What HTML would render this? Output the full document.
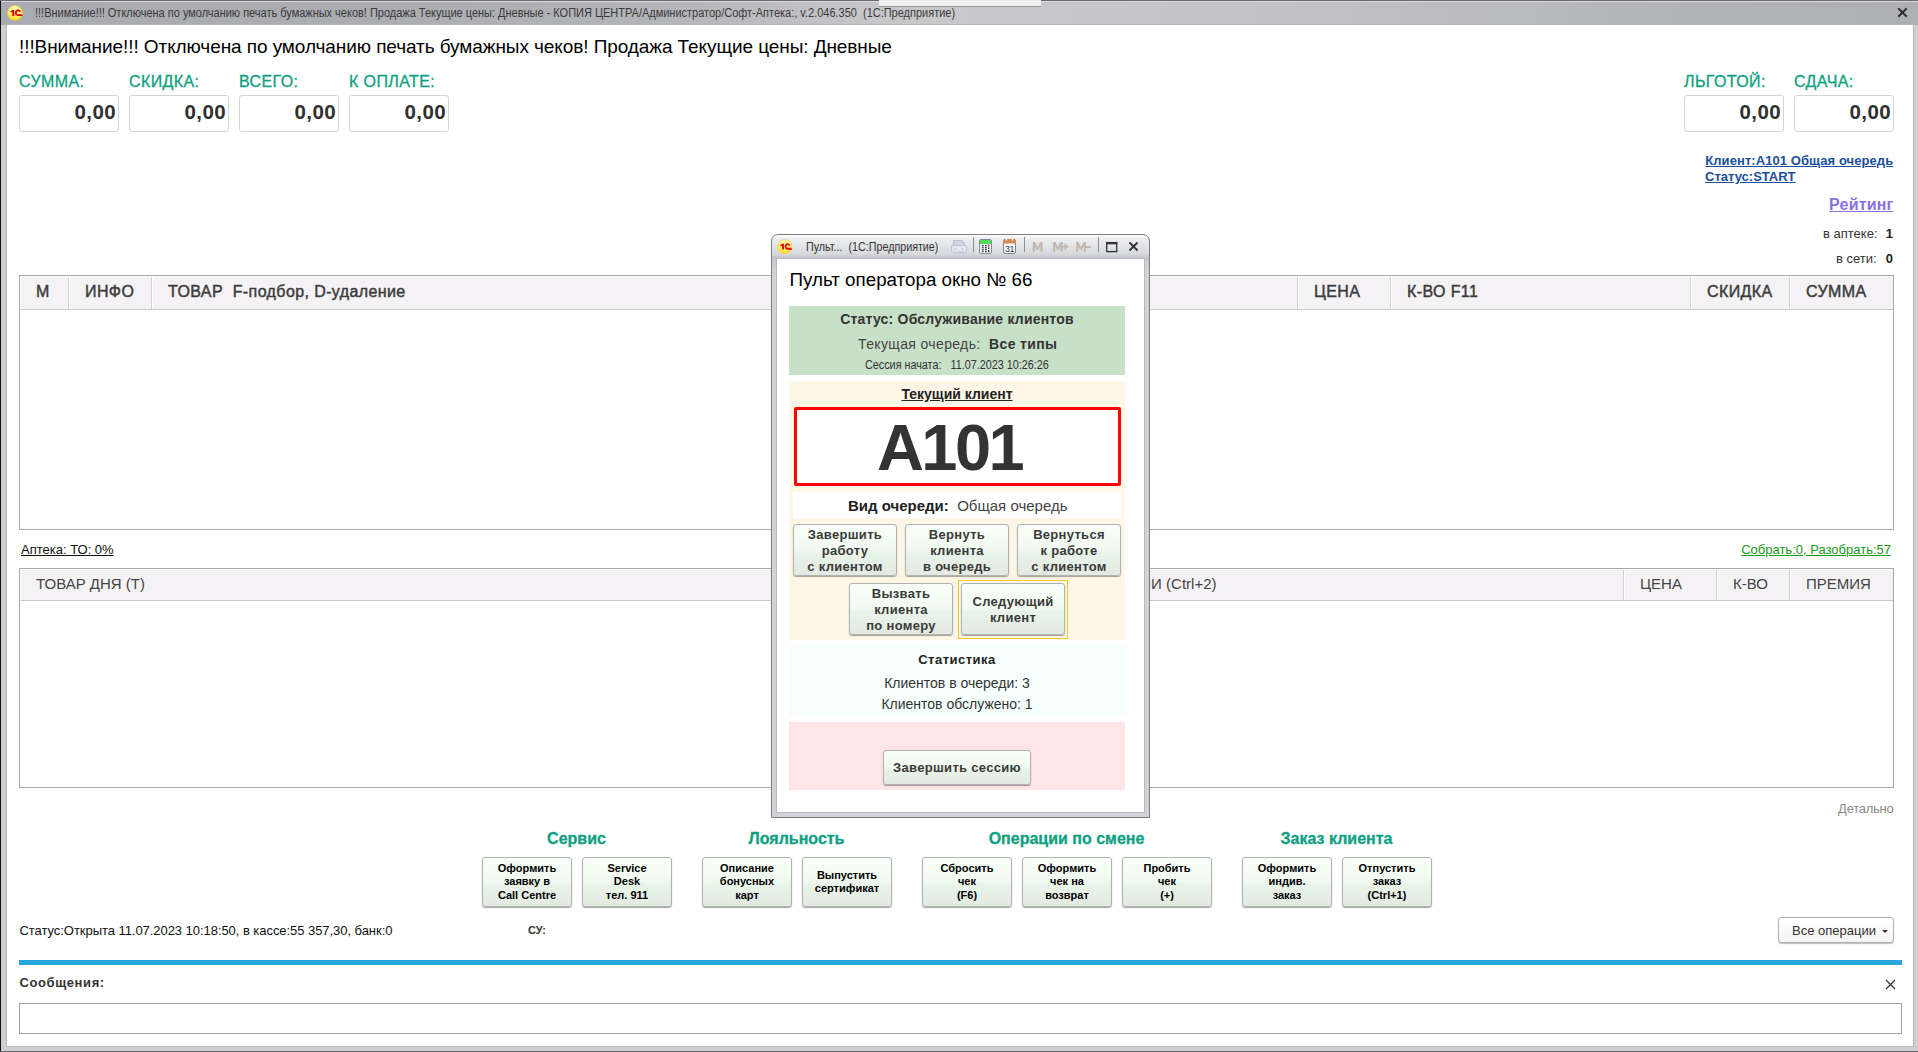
<!DOCTYPE html>
<html><head><meta charset="utf-8">
<style>
*{margin:0;padding:0;box-sizing:border-box}
html,body{width:1918px;height:1052px;overflow:hidden;background:#fff;font-family:"Liberation Sans",sans-serif}
.a{position:absolute}
.t{position:absolute;white-space:nowrap;line-height:1}
.b{font-weight:bold}
.teal{color:#0fa082;-webkit-text-stroke:0.3px #0fa082}
.hdr{color:#3c3c3c;font-size:16px;letter-spacing:0.4px;-webkit-text-stroke:0.45px #3c3c3c}
.vbox{position:absolute;top:95px;width:100px;height:37px;border:1px solid #d4d4d4;border-radius:3px;background:#fff}
.vbox span{position:absolute;right:2px;top:6px;font-size:20.5px;font-weight:bold;color:#303030;line-height:1;letter-spacing:0.4px}
.btn{position:absolute;border:1px solid #b0b2b0;border-radius:3px;background:linear-gradient(#f8fff8 0%,#f1faf1 48%,#e9f4e9 56%,#e2eae2 100%);box-shadow:0 1px 1px rgba(0,0,0,.35);text-align:center;color:#000;font-weight:bold}
.bb{width:90px;height:50px;top:857px;font-size:11px;line-height:13.8px;padding-top:3.5px}
.mb{font-size:13px;line-height:16px;color:#3a3a3a;letter-spacing:.3px}
</style></head><body>

<!-- main window frame -->
<div class="a" style="left:0;top:0;width:1918px;height:1052px;background:#cfd0d4"></div>
<div class="a" style="left:0;top:0;width:1px;height:1052px;background:#111"></div>
<div class="a" style="left:0;top:0;width:1918px;height:1px;background:#6c6a70"></div>
<div class="a" style="left:1px;top:1px;width:1917px;height:24px;background:linear-gradient(90deg,#a9abb0 0%,#abadb2 20%,#b4b5b9 35%,#c6c6c9 45%,#c9c9cc 50%,#c6c6c9 60%,#c0c0c3 70%,#b9babd 80%,#b1b3b5 88%,#aeb0b3 100%)"></div>
<div class="a" style="left:1px;top:1px;width:1917px;height:1px;background:#d8dadd"></div>
<div class="a" style="left:879px;top:0;width:162px;height:7px;background:#efefef;border-bottom:1px solid #9a9a9a"></div>
<div class="a" style="left:7px;top:25px;width:1906px;height:1021px;background:#fff;box-shadow:0 0 0 1px #b4b7bb"></div>
<div class="a" style="left:0;top:1051px;width:1918px;height:1px;background:#6c6a70"></div>

<!-- title bar -->
<svg class="a" style="left:7.10px;top:4.90px" width="16.00" height="16.00" viewBox="0 0 16 16"><defs><radialGradient id="lg1" cx="50%" cy="30%" r="75%"><stop offset="0" stop-color="#fffcc0"/><stop offset="0.55" stop-color="#fff070"/><stop offset="1" stop-color="#f8d000"/></radialGradient></defs><circle cx="8" cy="8" r="7.6" fill="url(#lg1)" stroke="#e8c850" stroke-width="0.4"/><path d="M3.3 6.2l2.4-1.3h1.6v6.1H5.3V7l-1.5.5z" fill="#e80000"/><path d="M13.1 6.9c-.3-1.5-2.5-2-3.6-.9-.9.9-.9 2.8.1 3.8" fill="none" stroke="#e80000" stroke-width="1.8"/><path d="M9.4 9.2h5.6l.6 1.9H9.9z" fill="#e80000"/></svg>
<div class="t" style="left:35px;top:6.6px;font-size:12px;color:#3a3a3a;transform:scaleX(0.915);transform-origin:0 0">!!!Внимание!!! Отключена по умолчанию печать бумажных чеков! Продажа Текущие цены: Дневные - КОПИЯ ЦЕНТРА/Администратор/Софт-Аптека:, v.2.046.350&nbsp; (1С:Предприятие)</div>
<svg class="a" style="left:1897px;top:7px" width="11" height="11"><path d="M1.2 1.2l8.6 8.6M9.8 1.2l-8.6 8.6" stroke="#303030" stroke-width="2"/></svg>

<!-- header -->
<div class="t" style="left:19px;top:37px;font-size:19px;color:#000;letter-spacing:-0.08px">!!!Внимание!!! Отключена по умолчанию печать бумажных чеков! Продажа Текущие цены: Дневные</div>

<div class="t teal" style="left:19px;top:73.5px;font-size:16px;letter-spacing:0.4px">СУММА:</div>
<div class="t teal" style="left:129px;top:73.5px;font-size:16px;letter-spacing:0.4px">СКИДКА:</div>
<div class="t teal" style="left:239px;top:73.5px;font-size:16px;letter-spacing:0.4px">ВСЕГО:</div>
<div class="t teal" style="left:349px;top:73.5px;font-size:16px;letter-spacing:0.4px">К ОПЛАТЕ:</div>
<div class="t teal" style="left:1684px;top:73.5px;font-size:16px;letter-spacing:0.4px">ЛЬГОТОЙ:</div>
<div class="t teal" style="left:1794px;top:73.5px;font-size:16px;letter-spacing:0.4px">СДАЧА:</div>
<div class="vbox" style="left:19px"><span>0,00</span></div>
<div class="vbox" style="left:129px"><span>0,00</span></div>
<div class="vbox" style="left:239px"><span>0,00</span></div>
<div class="vbox" style="left:349px"><span>0,00</span></div>
<div class="vbox" style="left:1684px"><span>0,00</span></div>
<div class="vbox" style="left:1794px"><span>0,00</span></div>

<div class="t b" style="right:24.8px;top:154px;font-size:13px;color:#1b4f9c;text-decoration:underline;text-align:left;letter-spacing:0.07px">Клиент:А101 Общая очередь</div>
<div class="t b" style="left:1705px;top:170px;font-size:13px;color:#1b4f9c;text-decoration:underline">Статус:START</div>
<div class="t b" style="right:24.5px;top:197px;font-size:16px;color:#8a70e6;text-decoration:underline;letter-spacing:0.2px">Рейтинг</div>
<div class="t" style="left:1823px;top:227px;font-size:13px;color:#333">в аптеке:</div>
<div class="t b" style="right:25px;top:227px;font-size:13px;color:#222">1</div>
<div class="t" style="left:1836px;top:252px;font-size:13px;color:#333">в сети:</div>
<div class="t b" style="right:25px;top:252px;font-size:13px;color:#222">0</div>

<!-- table 1 -->
<div class="a" style="left:19px;top:275px;width:1875px;height:255px;border:1px solid #a8a8a8;background:#fff"></div>
<div class="a" style="left:20px;top:276px;width:1873px;height:34px;background:#f5f2f5;border-top:1px solid #fff;border-left:1px solid #fff;border-bottom:1px solid #c8c8c8"></div>
<div class="a" style="left:68px;top:277px;width:2px;height:32px;background:#d0d0d0;border-right:1px solid #fff"></div>
<div class="a" style="left:151px;top:277px;width:2px;height:32px;background:#d0d0d0;border-right:1px solid #fff"></div>
<div class="a" style="left:1297px;top:277px;width:2px;height:32px;background:#d0d0d0;border-right:1px solid #fff"></div>
<div class="a" style="left:1390px;top:277px;width:2px;height:32px;background:#d0d0d0;border-right:1px solid #fff"></div>
<div class="a" style="left:1690px;top:277px;width:2px;height:32px;background:#d0d0d0;border-right:1px solid #fff"></div>
<div class="a" style="left:1789px;top:277px;width:2px;height:32px;background:#d0d0d0;border-right:1px solid #fff"></div>
<div class="t hdr" style="left:36px;top:283.5px">М</div>
<div class="t hdr" style="left:85px;top:283.5px">ИНФО</div>
<div class="t hdr" style="left:168px;top:283.5px">ТОВАР&nbsp; F-подбор, D-удаление</div>
<div class="t hdr" style="left:1314px;top:283.5px">ЦЕНА</div>
<div class="t hdr" style="left:1407px;top:283.5px">К-ВО F11</div>
<div class="t hdr" style="left:1707px;top:283.5px">СКИДКА</div>
<div class="t hdr" style="left:1806px;top:283.5px">СУММА</div>

<div class="t" style="left:21px;top:543px;font-size:13px;color:#111;text-decoration:underline">Аптека: ТО: 0%</div>
<div class="t" style="right:27px;top:543px;font-size:13px;color:#189a18;text-decoration:underline">Собрать:0, Разобрать:57</div>

<!-- table 2 -->
<div class="a" style="left:19px;top:568px;width:1875px;height:220px;border:1px solid #a8a8a8;background:#fff"></div>
<div class="a" style="left:20px;top:569px;width:1873px;height:32px;background:#f5f2f5;border-top:1px solid #fff;border-left:1px solid #fff;border-bottom:1px solid #c8c8c8"></div>
<div class="a" style="left:1623px;top:570px;width:2px;height:30px;background:#d0d0d0;border-right:1px solid #fff"></div>
<div class="a" style="left:1716px;top:570px;width:2px;height:30px;background:#d0d0d0;border-right:1px solid #fff"></div>
<div class="a" style="left:1789px;top:570px;width:2px;height:30px;background:#d0d0d0;border-right:1px solid #fff"></div>
<div class="t" style="left:36px;top:576px;font-size:15px;color:#444">ТОВАР ДНЯ (Т)</div>
<div class="t" style="left:1110.5px;top:576px;font-size:15px;color:#444">АКЦИИ (Ctrl+2)</div>
<div class="t" style="left:1640px;top:576px;font-size:15px;color:#444">ЦЕНА</div>
<div class="t" style="left:1733px;top:576px;font-size:15px;color:#444">К-ВО</div>
<div class="t" style="left:1806px;top:576px;font-size:15px;color:#444">ПРЕМИЯ</div>

<div class="t" style="right:24.5px;top:801.5px;font-size:13px;color:#8a8a8a;letter-spacing:-0.25px">Детально</div>

<!-- groups -->
<div class="t b teal" style="left:482px;width:189px;text-align:center;top:830.5px;font-size:16px">Сервис</div>
<div class="t b teal" style="left:702px;width:189px;text-align:center;top:830.5px;font-size:16px">Лояльность</div>
<div class="t b teal" style="left:922px;width:289px;text-align:center;top:830.5px;font-size:16px">Операции по смене</div>
<div class="t b teal" style="left:1242px;width:189px;text-align:center;top:830.5px;font-size:16px">Заказ клиента</div>

<div class="btn bb" style="left:482px">Оформить<br>заявку в<br>Call Centre</div>
<div class="btn bb" style="left:582px">Service<br>Desk<br>тел. 911</div>
<div class="btn bb" style="left:702px">Описание<br>бонусных<br>карт</div>
<div class="btn bb" style="left:802px;padding-top:10.5px">Выпустить<br>сертификат</div>
<div class="btn bb" style="left:922px">Сбросить<br>чек<br>(F6)</div>
<div class="btn bb" style="left:1022px">Оформить<br>чек на<br>возврат</div>
<div class="btn bb" style="left:1122px">Пробить<br>чек<br>(+)</div>
<div class="btn bb" style="left:1242px">Оформить<br>индив.<br>заказ</div>
<div class="btn bb" style="left:1342px">Отпустить<br>заказ<br>(Ctrl+1)</div>

<div class="t" style="left:19.5px;top:924px;font-size:13px;color:#111;letter-spacing:-0.05px">Статус:Открыта 11.07.2023 10:18:50, в кассе:55 357,30, банк:0</div>
<div class="t b" style="left:528px;top:925px;font-size:11px;color:#333">СУ:</div>

<div class="a" style="left:1778px;top:917px;width:116px;height:26px;border:1px solid #b0b0b0;border-radius:3px;background:linear-gradient(#fff,#f4f4f4);box-shadow:0 1px 1px rgba(0,0,0,.25)"></div>
<div class="t" style="left:1792px;top:924px;font-size:13px;color:#333">Все операции</div>
<div class="a" style="left:1882px;top:930px;width:0;height:0;border-left:3px solid transparent;border-right:3px solid transparent;border-top:3px solid #333"></div>

<div class="a" style="left:19px;top:960px;width:1883px;height:5px;background:#29a6e0"></div>
<div class="t b" style="left:19.5px;top:976px;font-size:13px;color:#333;letter-spacing:0.6px">Сообщения:</div>
<svg class="a" style="left:1885px;top:979px" width="11" height="11"><path d="M1 1l9 9M10 1l-9 9" stroke="#333" stroke-width="1.2"/></svg>
<div class="a" style="left:19px;top:1003px;width:1883px;height:31px;border:1px solid #a0a0a4;background:#fff"></div>

<!-- MODAL -->
<div id="modal" class="a" style="left:771px;top:234px;width:379px;height:584px;border:1px solid #7e7c80;border-radius:7px 7px 0 0;background:linear-gradient(#ffffff 0px,#eeeff1 3px,#e2e3e6 12px,#d8d9dd 19px,#c2c4c9 23px,#c8cacf 25px,#d2d3d7 40px,#d2d3d7 100%)">
</div>
<div class="a" style="left:777px;top:259px;width:367px;height:553px;background:#fff;box-shadow:0 0 0 1px #b8babe"></div>
<svg class="a" style="left:777.11px;top:239.01px" width="15.38" height="15.38" viewBox="0 0 16 16"><defs><radialGradient id="lg2" cx="50%" cy="30%" r="75%"><stop offset="0" stop-color="#fffcc0"/><stop offset="0.55" stop-color="#fff070"/><stop offset="1" stop-color="#f8d000"/></radialGradient></defs><circle cx="8" cy="8" r="7.6" fill="url(#lg2)" stroke="#e8c850" stroke-width="0.4"/><path d="M3.3 6.2l2.4-1.3h1.6v6.1H5.3V7l-1.5.5z" fill="#e80000"/><path d="M13.1 6.9c-.3-1.5-2.5-2-3.6-.9-.9.9-.9 2.8.1 3.8" fill="none" stroke="#e80000" stroke-width="1.8"/><path d="M9.4 9.2h5.6l.6 1.9H9.9z" fill="#e80000"/></svg>
<div class="t" style="left:805.5px;top:241.2px;font-size:12.2px;color:#333;transform:scaleX(0.88);transform-origin:0 0">Пульт...&nbsp; (1С:Предприятие)</div>
<svg class="a" style="left:940px;top:234px" width="210" height="25" viewBox="0 0 210 25">
<g fill="none" stroke="#b9c6d9" stroke-width="1.2">
<path d="M13.5 6.5h8l3 3v3h-11z" fill="#d4d6da"/>
<rect x="11.5" y="11.5" width="15" height="6.5" rx="1.2" fill="#e6e9ee"/>
<path d="M14 15h3M21 15h3M13.5 19h11"/>
</g>
<path d="M33.5 3v15" stroke="#8e8e90" stroke-width="1"/>
<rect x="39.5" y="5.5" width="12" height="14" rx="1.5" fill="#eef4fa" stroke="#7c8a96" stroke-width="1"/>
<rect x="40" y="6" width="11" height="4" fill="#52dc5c"/>
<g fill="#3a3a3a"><rect x="42" y="11" width="1.6" height="1.4"/><rect x="45" y="11" width="1.6" height="1.4"/><rect x="42" y="13" width="1.6" height="1.4"/><rect x="45" y="13" width="1.6" height="1.4"/><rect x="42" y="15" width="1.6" height="1.4"/><rect x="45" y="15" width="1.6" height="1.4"/><rect x="42" y="17" width="1.6" height="1.2"/><rect x="45" y="17" width="1.6" height="1.2"/><rect x="48" y="13.5" width="1.4" height="1.5"/><rect x="48" y="16" width="1.4" height="2.2"/></g>
<rect x="48" y="10.5" width="1.4" height="2.2" fill="#f03030"/>
<rect x="63.5" y="5.5" width="12" height="14" rx="1.5" fill="#f4f8fc" stroke="#7c8a96" stroke-width="1"/>
<path d="M63 9.5v-2.5a2 2 0 0 1 2-2h9a2 2 0 0 1 2 2v2.5z" fill="#d08c58"/>
<rect x="66" y="4.5" width="1" height="2" fill="#fff"/><rect x="72" y="4.5" width="1" height="2" fill="#fff"/>
<text x="69.6" y="17.8" font-family="Liberation Sans" font-size="8.8" fill="#3a3a3a" text-anchor="middle" letter-spacing="-0.3">31</text>
<path d="M84.5 3v15" stroke="#8e8e90" stroke-width="1"/>
<g fill="#c1b7ad"><path d="M92.8 8.1h2.4l2.45 5.2 2.45-5.2h2.4v9.6h-2.1v-5.9l-1.9 4.1h-1.7l-1.9-4.1v5.9h-2.1z"/><path d="M113 8.1h2.4l2.45 5.2 2.45-5.2h2.4v9.6h-2.1v-5.9l-1.9 4.1h-1.7l-1.9-4.1v5.9h-2.1z"/><path d="M136.2 8.1h2.4l2.45 5.2 2.45-5.2h2.4v9.6h-2.1v-5.9l-1.9 4.1h-1.7l-1.9-4.1v5.9h-2.1z"/></g>
<path d="M122.2 12.7h6.5M125.45 9.5v6.4M144.8 13h6" stroke="#c1b7ad" stroke-width="1.8"/>
<path d="M158.5 3v15" stroke="#8e8e90" stroke-width="1"/>
<rect x="166.7" y="8.6" width="10" height="9" fill="none" stroke="#333" stroke-width="1.3"/>
<rect x="166" y="8" width="11.4" height="2.3" fill="#333"/>
<path d="M189.5 8.5l8 8M197.5 8.5l-8 8" stroke="#333" stroke-width="1.9"/>
</svg>

<div class="t" style="left:789.5px;top:271px;font-size:18.8px;color:#000">Пульт оператора окно № 66</div>

<div class="a" style="left:789px;top:306px;width:336px;height:69px;background:#c8dfc8"></div>
<div class="t b" style="left:789px;width:336px;text-align:center;top:312px;font-size:14px;color:#333;letter-spacing:0.2px">Статус: Обслуживание клиентов</div>
<div class="t" style="left:858px;top:337px;font-size:14px;color:#444;letter-spacing:0.36px">Текущая очередь:&nbsp; <b style="color:#333">Все типы</b></div>
<div class="t" style="left:865px;top:358.5px;font-size:12px;color:#333;transform:scaleX(0.9);transform-origin:0 0">Сессия начата:&nbsp;&nbsp; 11.07.2023 10:26:26</div>

<div class="a" style="left:789px;top:381px;width:336px;height:259px;background:#fef6e7"></div>
<div class="t b" style="left:789px;width:336px;text-align:center;top:387px;font-size:14px;color:#222;text-decoration:underline">Текущий клиент</div>
<div class="a" style="left:794px;top:407px;width:327px;height:79px;border:3px solid #f00;border-radius:2px;background:#fff"></div>
<div class="t b" style="left:877px;top:415px;font-size:65px;color:#333;letter-spacing:-2.6px">A101</div>
<div class="a" style="left:793px;top:492px;width:328px;height:26px;background:#fff"></div>
<div class="t" style="left:848px;top:498px;font-size:15px;color:#222"><b>Вид очереди:</b>&nbsp; <span style="color:#444">Общая очередь</span></div>

<div class="btn mb" style="left:793px;top:524px;width:104px;height:52px;padding-top:2px">Завершить<br>работу<br>с клиентом</div>
<div class="btn mb" style="left:905px;top:524px;width:104px;height:52px;padding-top:2px">Вернуть<br>клиента<br>в очередь</div>
<div class="btn mb" style="left:1017px;top:524px;width:104px;height:52px;padding-top:2px">Вернуться<br>к работе<br>с клиентом</div>
<div class="btn mb" style="left:849px;top:583px;width:104px;height:52px;padding-top:2px">Вызвать<br>клиента<br>по номеру</div>
<div class="a" style="left:958px;top:580px;width:110px;height:59px;border:1px solid #f2c630"></div>
<div class="btn mb" style="left:961px;top:583px;width:104px;height:52px;padding-top:10px">Следующий<br>клиент</div>

<div class="a" style="left:789px;top:646px;width:336px;height:70px;background:#f6fffe"></div>
<div class="t b" style="left:789px;width:336px;text-align:center;top:653px;font-size:13px;color:#222;letter-spacing:0.5px">Статистика</div>
<div class="t" style="left:789px;width:336px;text-align:center;top:675.5px;font-size:14px;color:#333">Клиентов в очереди: 3</div>
<div class="t" style="left:789px;width:336px;text-align:center;top:697px;font-size:14px;color:#333">Клиентов обслужено: 1</div>

<div class="a" style="left:789px;top:722px;width:336px;height:68px;background:#ffe5e5"></div>
<div class="btn mb" style="left:883px;top:750px;width:148px;height:35px;padding-top:9px">Завершить сессию</div>

</body></html>
